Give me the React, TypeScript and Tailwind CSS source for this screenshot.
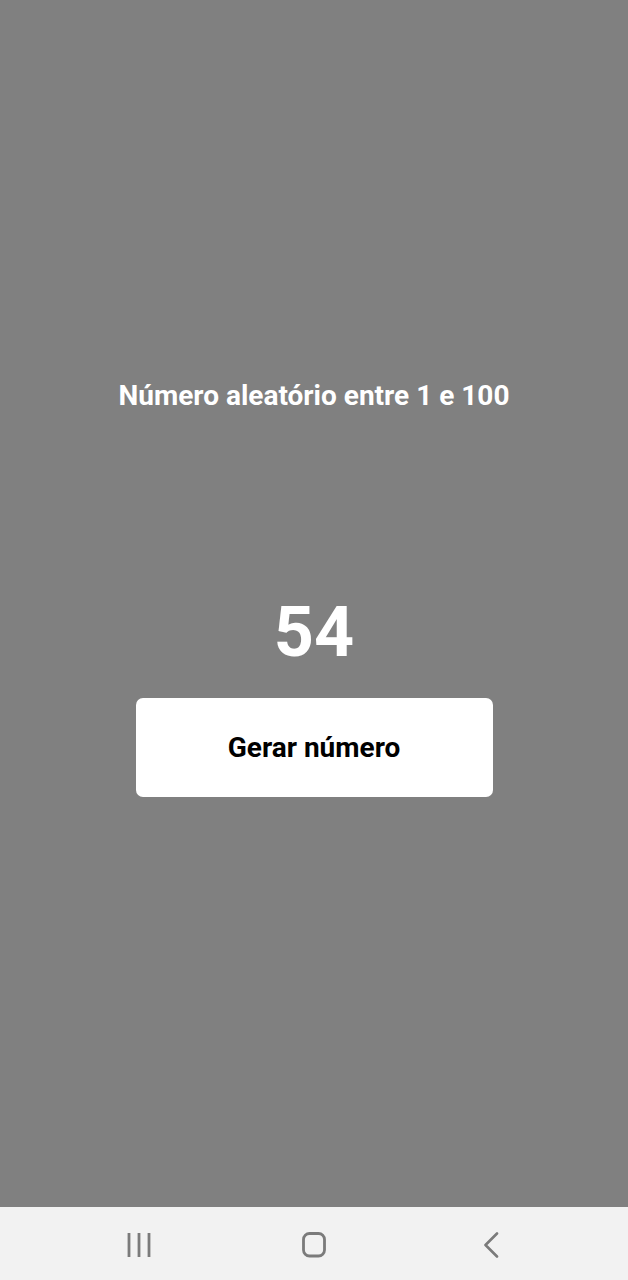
import React from "react";

export default function App() {
  return (
    <div className="w-[628px] h-[1280px] flex flex-col" style={{ fontFamily: "Roboto, 'Noto Sans', sans-serif" }}>
      <div className="h-[1207px] bg-[#808080] flex flex-col items-center">
        <div className="mt-[377px] h-[38px] flex items-center text-white font-bold text-[28px] leading-none">
          Número aleatório entre 1 e 100
        </div>
        <div className="mt-[181px] h-[72px] flex items-center text-white font-bold text-[70px] leading-none">
          54
        </div>
        <button className="mt-[30px] w-[357px] h-[99px] bg-white rounded-[7px] flex items-center justify-center text-black font-bold text-[28px] leading-none">
          Gerar número
        </button>
      </div>
      <div className="h-[73px] bg-[#f2f2f2] flex items-center justify-center gap-[150px] pt-[3px]">
        <svg width="26" height="26" viewBox="0 0 26 26">
          <g stroke="#7b7b7b" strokeWidth="2.8">
            <line x1="4" y1="1" x2="4" y2="25" />
            <line x1="14" y1="1" x2="14" y2="25" />
            <line x1="24" y1="1" x2="24" y2="25" />
          </g>
        </svg>
        <svg width="26" height="26" viewBox="0 0 26 26">
          <rect x="2.5" y="1.5" width="21" height="22.5" rx="6" fill="none" stroke="#7b7b7b" strokeWidth="2.8" />
        </svg>
        <svg width="26" height="26" viewBox="0 0 26 26">
          <polyline points="20,1.5 8.5,13 20,24.5" fill="none" stroke="#7b7b7b" strokeWidth="2.6" strokeLinecap="round" strokeLinejoin="round" />
        </svg>
      </div>
    </div>
  );
}
